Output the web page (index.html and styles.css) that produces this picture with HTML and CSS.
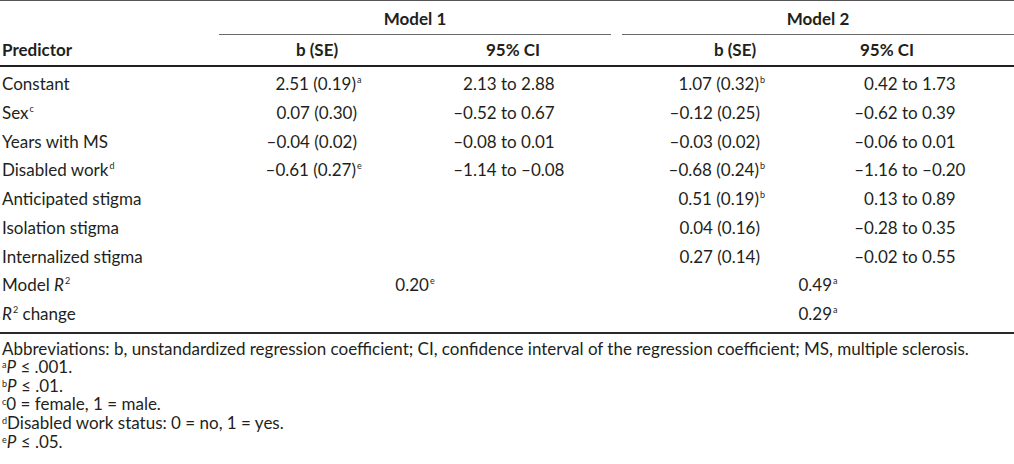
FILE: index.html
```html
<!DOCTYPE html>
<html>
<head>
<meta charset="utf-8">
<link rel="stylesheet" href="styles.css">
</head>
<body>
<div class="page">
<table class="tbl">
  <colgroup>
    <col class="c-pred">
    <col class="c-val">
    <col class="c-val">
    <col class="c-gap">
    <col class="c-val">
    <col class="c-val">
  </colgroup>
  <thead>
    <tr class="h1">
      <th></th>
      <th colspan="2" class="model">Model 1</th>
      <th></th>
      <th colspan="2" class="model">Model 2</th>
    </tr>
    <tr class="h2">
      <th class="pred">Predictor</th>
      <th class="hb1">b (SE)</th>
      <th class="hc1">95% CI</th>
      <th></th>
      <th class="hb2">b (SE)</th>
      <th class="hc2">95% CI</th>
    </tr>
  </thead>
  <tbody>
    <tr>
      <td class="pred">Constant</td>
      <td class="b1">2.51 (0.19)<span class="sup">a</span></td>
      <td class="ci1">2.13 to <span class="hi">2.88</span></td>
      <td></td>
      <td class="b2">1.07 (0.32)<span class="sup">b</span></td>
      <td class="ci2">0.42 to <span class="hi">1.73</span></td>
    </tr>
    <tr>
      <td class="pred">Sex<span class="lsup">c</span></td>
      <td class="b1">0.07 (0.30)</td>
      <td class="ci1">–0.52 to <span class="hi">0.67</span></td>
      <td></td>
      <td class="b2">–0.12 (0.25)</td>
      <td class="ci2">–0.62 to <span class="hi">0.39</span></td>
    </tr>
    <tr>
      <td class="pred">Years with MS</td>
      <td class="b1">–0.04 (0.02)</td>
      <td class="ci1">–0.08 to <span class="hi">0.01</span></td>
      <td></td>
      <td class="b2">–0.03 (0.02)</td>
      <td class="ci2">–0.06 to <span class="hi">0.01</span></td>
    </tr>
    <tr>
      <td class="pred">Disabled work<span class="lsup">d</span></td>
      <td class="b1">–0.61 (0.27)<span class="sup">e</span></td>
      <td class="ci1">–1.14 to <span class="hi">–0.08</span></td>
      <td></td>
      <td class="b2">–0.68 (0.24)<span class="sup">b</span></td>
      <td class="ci2">–1.16 to <span class="hi">–0.20</span></td>
    </tr>
    <tr>
      <td class="pred">Anticipated stigma</td>
      <td></td>
      <td></td>
      <td></td>
      <td class="b2">0.51 (0.19)<span class="sup">b</span></td>
      <td class="ci2">0.13 to <span class="hi">0.89</span></td>
    </tr>
    <tr>
      <td class="pred">Isolation stigma</td>
      <td></td>
      <td></td>
      <td></td>
      <td class="b2">0.04 (0.16)</td>
      <td class="ci2">–0.28 to <span class="hi">0.35</span></td>
    </tr>
    <tr>
      <td class="pred">Internalized stigma</td>
      <td></td>
      <td></td>
      <td></td>
      <td class="b2">0.27 (0.14)</td>
      <td class="ci2">–0.02 to <span class="hi">0.55</span></td>
    </tr>
    <tr>
      <td class="pred">Model <i>R</i><span class="lsup">2</span></td>
      <td colspan="2" class="span1">0.20<span class="lsup">e</span></td>
      <td></td>
      <td colspan="2" class="span2">0.49<span class="lsup">a</span></td>
    </tr>
    <tr class="last">
      <td class="pred"><i>R</i><span class="lsup">2</span> change</td>
      <td colspan="2"></td>
      <td></td>
      <td colspan="2" class="span2">0.29<span class="lsup">a</span></td>
    </tr>
  </tbody>
</table>
<div class="notes">
  <p>Abbreviations: b, unstandardized regression coefficient; CI, confidence interval of the regression coefficient; MS, multiple sclerosis.</p>
  <p><span class="nsup">a</span><i>P</i> ≤ .001.</p>
  <p><span class="nsup">b</span><i>P</i> ≤ .01.</p>
  <p><span class="nsup">c</span>0 = female, 1 = male.</p>
  <p><span class="nsup">d</span>Disabled work status: 0 = no, 1 = yes.</p>
  <p><span class="nsup">e</span><i>P</i> ≤ .05.</p>
</div>
</div>
</body>
</html>
```

FILE: styles.css
```css
html, body {
  margin: 0;
  padding: 0;
  background: #ffffff;
}

.page {
  width: 1014px;
  font-family: Lato, "Open Sans", sans-serif;
  font-size: 17px;
  color: #231f20;
}

.tbl {
  width: 1014px;
  table-layout: fixed;
  border-collapse: separate;
  border-spacing: 0;
  border-top: 1px solid #555555;
  border-bottom: 2px solid #2a2a2a;
}

.c-pred { width: 219px; }
.c-val { width: 196px; }
.c-gap { width: 11px; }

.tbl th {
  font-weight: 700;
  line-height: 22px;
  padding: 0;
  white-space: nowrap;
}

.h1 th {
  padding-top: 7.4px;
  padding-bottom: 3.6px;
}

.h1 th.model {
  text-align: center;
  border-bottom: 1px solid #6b6b6b;
}

.h2 th {
  padding-top: 4.2px;
  padding-bottom: 3.8px;
  text-align: center;
  border-bottom: 2px solid #231f20;
}

.tbl .pred {
  text-align: left;
  padding-left: 2px;
}

.tbl .hb2 { padding-left: 30px; }
.tbl .hc2 { padding-right: 58px; }

.tbl td {
  line-height: 22px;
  padding: 6.2px 0 0.55px 0;
  white-space: nowrap;
}

.tbl tr.last td {
  padding-bottom: 7px;
}

.b1, .b2 {
  text-align: right;
  padding-right: 58px !important;
}

.ci1, .ci2 {
  text-align: right;
}

.ci1 { padding-right: 53px !important; }
.ci2 { padding-right: 55px !important; }

.hi {
  display: inline-block;
  width: 37px;
  text-align: left;
  white-space: nowrap;
}

.span1, .span2 {
  text-align: center;
}

.sup {
  display: inline-block;
  width: 0;
  font-size: 9px;
  line-height: 0;
  vertical-align: 7px;
  padding-left: 1px;
}

.lsup {
  font-size: 9px;
  line-height: 0;
  vertical-align: 7px;
  margin-left: 1px;
}

.notes {
  padding-top: 5.5px;
}

.notes p {
  margin: 0;
  line-height: 18.6px;
  padding-left: 2px;
  white-space: nowrap;
}

.nsup {
  font-size: 9px;
  line-height: 0;
  vertical-align: 5px;
}
```
